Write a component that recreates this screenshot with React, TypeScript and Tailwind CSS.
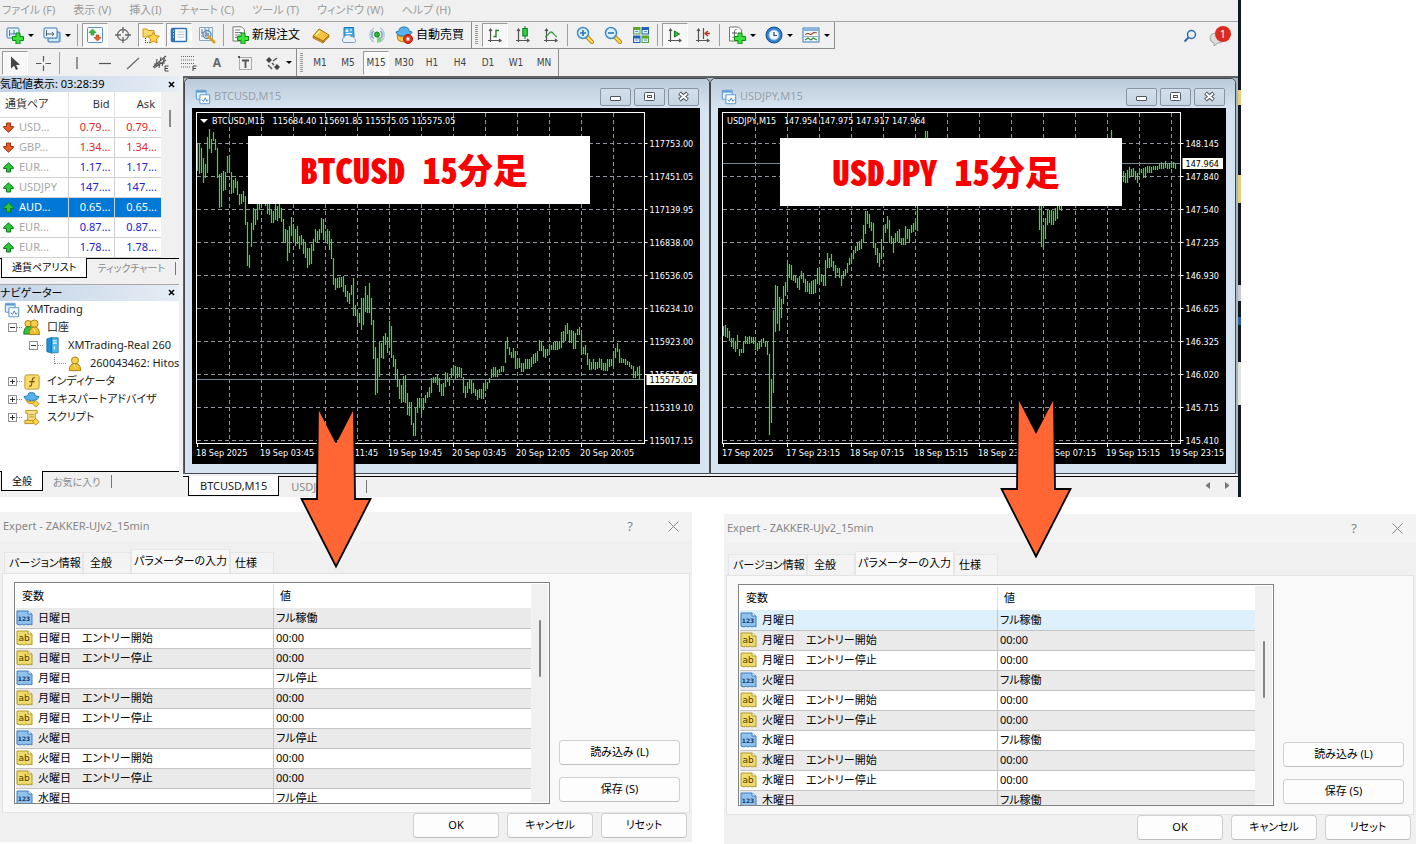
import type { ReactNode } from "react";

type Bar = [number, number];
type Segment = { start: number; bars: Bar[] };
type ChartProps = {
  title: string;
  caption: string;
  menu?: boolean;
  plotRight: number;
  gridCount: number;
  prices: string[];
  current: string;
  currentY: number;
  times: string[];
  segments: Segment[];
  children: ReactNode;
};

/* high / low of each bar, two pixels per bar */
const BTC: Segment[] = [
  {
    start: 0,
    bars: [
      [35, 63], [35, 66], [40, 65], [50, 75], [56, 70], [29, 65], [21, 41], [31, 45], [24, 33], [31, 42],
      [40, 70], [66, 100], [65, 99], [63, 83], [64, 82], [48, 65], [47, 65], [64, 86], [72, 85], [70, 80],
      [73, 87], [86, 97], [86, 96], [83, 94], [88, 117], [114, 158], [147, 160], [115, 139], [100, 122], [101, 117],
      [96, 112], [90, 102], [88, 98], [85, 96], [88, 98], [94, 106], [96, 107], [101, 115], [103, 115], [96, 112],
      [98, 113], [95, 110], [100, 114], [111, 134], [121, 135], [122, 153], [118, 145], [109, 128], [116, 133], [121, 138],
      [118, 136], [128, 141], [127, 137], [131, 146], [134, 150], [140, 160], [140, 157], [136, 156], [131, 143], [121, 134],
      [123, 135], [121, 132], [110, 125], [111, 132], [123, 133], [121, 136], [123, 142], [131, 151], [150, 177], [170, 182],
      [170, 180], [169, 180], [169, 179], [168, 184], [177, 189], [183, 194], [185, 196], [177, 187], [170, 208], [197, 208],
      [202, 215], [205, 215], [190, 222], [190, 217], [178, 204], [187, 205], [175, 205], [190, 217], [212, 251], [239, 287],
      [250, 285], [234, 269], [235, 250], [228, 251], [225, 237], [229, 245], [213, 237], [218, 250], [247, 259], [251, 271],
      [261, 279], [272, 291], [277, 295], [268, 294], [267, 295], [285, 307], [294, 308], [294, 317], [315, 328], [299, 328],
      [290, 305], [290, 300], [290, 306], [290, 302], [287, 295], [284, 290], [279, 289], [270, 285], [269, 275], [269, 275],
      [266, 277], [270, 284], [276, 288], [275, 288], [264, 279], [265, 274], [269, 278], [260, 270], [257, 267], [258, 271],
      [259, 270], [259, 269], [260, 270], [269, 285], [278, 290], [274, 285], [271, 281], [272, 286], [275, 285], [281, 288],
      [282, 292], [281, 290], [281, 291], [275, 291], [275, 283], [274, 281], [270, 275], [261, 270], [259, 269], [259, 269],
      [262, 269], [261, 265], [258, 264], [258, 264], [233, 255], [229, 241], [239, 247], [244, 250], [240, 250], [243, 261],
      [251, 260], [250, 260], [255, 264], [255, 264], [251, 261], [251, 261], [251, 261], [249, 259], [246, 256], [245, 255],
      [243, 253], [232, 243], [234, 243], [238, 249], [241, 250], [241, 248], [237, 244], [237, 242], [234, 242], [234, 242],
      [234, 242], [233, 241], [224, 240], [223, 235], [217, 233], [215, 226], [222, 235], [222, 235], [223, 241], [225, 241],
      [221, 227], [219, 227], [226, 247], [239, 246], [237, 247], [245, 257], [251, 262], [254, 262], [251, 261], [254, 262],
      [254, 261], [250, 260], [251, 262], [255, 263], [255, 263], [251, 263], [251, 259], [251, 258], [243, 258], [240, 250],
      [235, 244], [241, 255], [250, 255], [251, 255], [251, 257], [253, 257], [254, 259], [257, 261], [258, 270], [263, 270],
      [259, 268], [258, 272],
    ],
  },
];

const JPY: Segment[] = [
  {
    start: 0,
    bars: [
      [218, 228], [217, 229], [220, 230], [223, 233], [230, 239], [230, 241], [233, 244], [227, 241], [241, 248], [241, 245],
      [233, 245], [228, 236], [229, 236], [228, 236], [229, 235], [229, 236], [232, 242], [235, 243], [234, 241], [231, 239],
      [230, 235], [233, 239], [234, 247], [246, 327], [271, 315], [202, 285], [177, 224], [178, 216], [189, 223], [191, 210],
      [178, 196], [174, 188], [155, 180], [156, 170], [157, 172], [167, 173], [168, 175], [170, 180], [168, 182], [163, 171],
      [165, 175], [171, 184], [173, 184], [175, 186], [173, 186], [172, 186], [171, 185], [160, 176], [159, 175], [166, 174],
      [168, 178], [152, 178], [145, 160], [150, 160], [146, 159], [153, 163], [157, 170], [160, 165], [160, 170], [167, 178],
      [163, 171], [161, 168], [155, 165], [150, 157], [146, 156], [142, 151], [138, 145], [135, 143], [133, 142], [131, 141],
      [117, 134], [103, 126], [103, 116], [106, 120], [114, 123], [115, 140], [135, 147], [140, 155], [145, 159], [131, 151],
      [118, 133], [116, 125], [108, 121], [112, 135], [128, 136], [130, 145], [125, 135], [123, 134], [121, 135], [130, 137],
      [130, 137], [118, 137], [121, 131], [121, 135], [117, 125], [115, 124], [113, 122], [85, 123],
    ],
  },
  { start: 101, bars: [[23, 60], [23, 60]] },
  {
    start: 158,
    bars: [
      [90, 122], [90, 139], [118, 140], [110, 131], [102, 117], [102, 115], [102, 117], [103, 117], [100, 113], [96, 111],
      [92, 101], [90, 103],
    ],
  },
  { start: 194, bars: [[22, 40]] },
  {
    start: 200,
    bars: [
      [63, 74], [65, 75], [62, 75], [59, 70], [61, 68], [60, 69], [63, 72], [65, 75], [60, 67], [61, 65],
      [60, 70], [59, 70], [58, 65], [58, 65], [59, 65], [58, 62], [58, 62], [58, 62], [55, 61], [54, 61],
      [55, 61], [53, 60], [56, 61], [55, 61], [53, 60], [54, 60], [55, 61],
    ],
  },
];

const BTC_PRICES = ["117753.00", "117451.05", "117139.95", "116838.00", "116536.05", "116234.10", "115923.00", "115621.05", "115319.10", "115017.15"];
const JPY_PRICES = ["148.145", "147.840", "147.540", "147.235", "146.930", "146.625", "146.325", "146.020", "145.715", "145.410"];
const BTC_TIMES = ["18 Sep 2025", "19 Sep 03:45", "19 Sep 11:45", "19 Sep 19:45", "20 Sep 03:45", "20 Sep 12:05", "20 Sep 20:05"];
const JPY_TIMES = ["17 Sep 2025", "17 Sep 23:15", "18 Sep 07:15", "18 Sep 15:15", "18 Sep 23:15", "19 Sep 07:15", "19 Sep 15:15", "19 Sep 23:15"];

const MENU = ["ファイル (F)", "表示 (V)", "挿入(I)", "チャート (C)", "ツール (T)", "ウィンドウ (W)", "ヘルプ (H)"];
const PERIODS = ["M1", "M5", "M15", "M30", "H1", "H4", "D1", "W1", "MN"];

const QUOTES = [
  { symbol: "USD...", bid: "0.79...", ask: "0.79...", up: false },
  { symbol: "GBP...", bid: "1.34...", ask: "1.34...", up: false },
  { symbol: "EUR...", bid: "1.17...", ask: "1.17...", up: true },
  { symbol: "USDJPY", bid: "147....", ask: "147....", up: true },
  { symbol: "AUD...", bid: "0.65...", ask: "0.65...", up: true, selected: true },
  { symbol: "EUR...", bid: "0.87...", ask: "0.87...", up: true },
  { symbol: "EUR...", bid: "1.78...", ask: "1.78...", up: true },
];

type Param = [name: string, value: string];
const LEFT_PARAMS: Param[] = [
  ["日曜日", "フル稼働"],
  ["日曜日　エントリー開始", "00:00"],
  ["日曜日　エントリー停止", "00:00"],
  ["月曜日", "フル停止"],
  ["月曜日　エントリー開始", "00:00"],
  ["月曜日　エントリー停止", "00:00"],
  ["火曜日", "フル停止"],
  ["火曜日　エントリー開始", "00:00"],
  ["火曜日　エントリー停止", "00:00"],
  ["水曜日", "フル停止"],
];
const RIGHT_PARAMS: Param[] = [
  ["月曜日", "フル稼働"],
  ["月曜日　エントリー開始", "00:00"],
  ["月曜日　エントリー停止", "00:00"],
  ["火曜日", "フル稼働"],
  ["火曜日　エントリー開始", "00:00"],
  ["火曜日　エントリー停止", "00:00"],
  ["水曜日", "フル稼働"],
  ["水曜日　エントリー開始", "00:00"],
  ["水曜日　エントリー停止", "00:00"],
  ["木曜日", "フル稼働"],
];

/* ---------- icons ---------- */

function Icon({ children, size = 18 }: { children: ReactNode; size?: number }) {
  return (
    <svg width={size} height={size} viewBox="0 0 18 18" fill="none" className="shrink-0" aria-hidden="true">
      {children}
    </svg>
  );
}

const Plus = () => <path d="M10 7h4v3.500h3.500v4H14V18h-4v-3.500H6.500v-4H10z" fill="#3be23b" stroke="#0b8a12" />;
const Axes = () => <path d="M4.500 3v13M2 14.500h13M3 5l1.500-2L6 5M13 13l2 1.500-2 1.500" stroke="#555" strokeWidth="1.200" />;
const Wand = () => <path d="M11 11l5 5" stroke="#d9a520" strokeWidth="3" strokeLinecap="round" />;

const NewChartIcon = () => (
  <Icon>
    <rect x="1" y="2" width="12" height="10" rx="1" fill="#e8f3fc" stroke="#3a7ab8" />
    <path d="M3.500 4v6M8 4v4M3 8h7" stroke="#3a7ab8" />
    <Plus />
  </Icon>
);
const ProfilesIcon = () => (
  <Icon>
    <rect x="5" y="6" width="12" height="10" rx="1" fill="#a9cdec" stroke="#3a7ab8" />
    <path d="M6 14h9" stroke="#fff" />
    <rect x="1" y="2" width="13" height="10" rx="1" fill="#eef6fd" stroke="#3a7ab8" />
    <path d="M3.500 4v6M3 8h8M9 6l2 2-2 2" stroke="#4b5d6c" />
  </Icon>
);
const MarketWatchIcon = () => (
  <Icon>
    <rect x="1.500" y="1.500" width="15" height="15" rx="1" fill="#f7fbff" stroke="#5b93c9" />
    <path d="M6.500 3l3.500 3.500H8V9H5V6.500H3z" fill="#34c234" stroke="#15801a" strokeWidth=".6" />
    <path d="M11.500 15L8 11.500h2V9h3v2.500h2z" fill="#f0622a" stroke="#a93a10" strokeWidth=".6" />
  </Icon>
);
const TargetIcon = () => (
  <Icon>
    <circle cx="9" cy="9" r="5.500" stroke="#666" strokeWidth="1.300" />
    <path d="M9 1v6M9 11v6M1 9h6M11 9h6" stroke="#666" strokeWidth="1.300" />
  </Icon>
);
const FavoriteIcon = () => (
  <Icon>
    <path d="M1 3h4l1 1.500h6V11H1z" fill="#f7dc6a" stroke="#c79a1e" />
    <path d="M3.500 12v5M5 16.500h3" stroke="#444" strokeDasharray="1 1" />
    <path d="M11.500 6l1.900 3.600 4 .6-2.900 2.800.7 4-3.700-1.900L7.800 17l.8-4-2.900-2.800 4-.6z" fill="#ffd84a" stroke="#c98a12" />
  </Icon>
);
const NavigatorIcon = () => (
  <Icon>
    <rect x="1.500" y="2.500" width="15" height="13" rx="1" fill="#fff" stroke="#2f74b5" strokeWidth="1.500" />
    <rect x="2" y="3" width="3" height="12" fill="#2f74b5" />
    <path d="M3 5h1M3 8h1M3 11h1" stroke="#fff" />
    <path d="M7.500 6h7M7.500 8.500h7M7.500 11h7" stroke="#b5c4d0" />
  </Icon>
);
const TesterIcon = () => (
  <Icon>
    <path d="M1.500 1.500h13v13h-13z" fill="#f4f7fb" stroke="#8aa7c2" />
    <path d="M4 3v9M7 2v8M11 2v4M3 6h3" stroke="#6e7f8f" strokeDasharray="2 1" />
    <circle cx="9" cy="8.500" r="4" fill="#cfe6f8" fillOpacity=".85" stroke="#4a8cc4" strokeWidth="1.300" />
    <path d="M8 6v5M10 7v3" stroke="#456" />
    <Wand />
  </Icon>
);
const NewOrderIcon = () => (
  <Icon>
    <path d="M2 .8h8.500l3 3V15H2z" fill="#fff" stroke="#777" />
    <path d="M4 4h5M4 6.500h7M4 9h5M4 11.500h3" stroke="#777" />
    <Plus />
  </Icon>
);
const BookIcon = () => (
  <Icon>
    <path d="M1 10l6-7 10 6-6 6z" fill="#f5c242" stroke="#a8730e" />
    <path d="M1 10l10 5v2L1 12zM11 15l6-6v2l-6 6z" fill="#d28c14" stroke="#a8730e" strokeWidth=".7" />
    <path d="M4 9l4-4" stroke="#fff0b0" strokeWidth="1.500" />
  </Icon>
);
const EditorIcon = () => (
  <Icon>
    <path d="M4 1.500h9.500l.5 9.500H4z" fill="#45aeea" stroke="#1b78b8" />
    <path d="M6 4h2v1.500H6zM10 4h2M6 7.500h6" stroke="#fff" />
    <path d="M4 16.500a2.700 2.700 0 010-5 4 4 0 017-1 3 3 0 013.500 2 2.200 2.200 0 010 4z" fill="#eaf1f8" stroke="#7d9cbd" />
  </Icon>
);
const SignalIcon = () => (
  <Icon>
    <path d="M6 16A8 8 0 016 2M12 2a8 8 0 010 14" stroke="#a9c3d6" strokeWidth="1.300" />
    <path d="M5.500 12.500a5 5 0 010-7.500M12.500 5a5 5 0 010 7.500" stroke="#6f9fc0" strokeWidth="1.500" />
    <path d="M9 9v8q4-1 5-4" fill="#7fd67f" />
    <circle cx="9" cy="8.500" r="2.500" fill="#35b835" stroke="#168020" />
  </Icon>
);
const AutoTradeIcon = () => (
  <Icon>
    <path d="M2 9q7 4 13 0v5q-6 4-12 0z" fill="#f4c843" stroke="#b9860f" />
    <path d="M4 5q0-4 5-4t5 4l3 1q-1 4-8 4T1 6z" fill="#55b2ec" stroke="#2878b4" />
    <circle cx="13" cy="13" r="4.500" fill="#e03420" stroke="#a31c10" />
    <rect x="11.500" y="11.500" width="3" height="3" fill="#fff" />
  </Icon>
);
const BarsIcon = () => (
  <Icon>
    <Axes />
    <path d="M10 3.500v8M10 4.500h3M7.500 10.500H10" stroke="#1f8a2c" strokeWidth="1.400" />
  </Icon>
);
const CandlesIcon = () => (
  <Icon>
    <Axes />
    <path d="M11 0v13" stroke="#0f7a1c" />
    <rect x="8.800" y="2.500" width="4.500" height="7.500" fill="#2fd23c" stroke="#0f7a1c" />
  </Icon>
);
const LineIcon = () => (
  <Icon>
    <Axes />
    <path d="M3 11c3-1 4-5 6-5s3 3 6 5" stroke="#3c9a48" strokeWidth="1.300" />
  </Icon>
);
const ZoomIcon = ({ plus }: { plus?: boolean }) => (
  <Icon>
    <path d="M11 11l5 5" stroke="#b08010" strokeWidth="4" strokeLinecap="round" />
    <path d="M11 11l5 5" stroke="#ffdd52" strokeWidth="2.400" strokeLinecap="round" />
    <circle cx="7" cy="7" r="5.500" fill="#dff0fc" stroke="#3b8cc8" strokeWidth="1.500" />
    <path d={plus ? "M4 7h6M7 4v6" : "M4 7h6"} stroke="#2878b4" strokeWidth="1.600" />
  </Icon>
);
const TileIcon = () => (
  <Icon>
    <path d="M1 1h7.500v7.500H1z" fill="#55a82a" />
    <path d="M9.500 1H17v7.500H9.500z" fill="#1e5fc0" />
    <path d="M1 9.500h7.500V17H1z" fill="#1e5fc0" />
    <path d="M9.500 9.500H17V17H9.500z" fill="#55a82a" />
    <path d="M2 4h5.500v3.500H2zM10.500 4H16v3.500h-5.500zM2 12.500h5.500V16H2zM10.500 12.500H16V16h-5.500z" fill="#dcebfb" />
    <path d="M3 5.500h3M12 5.500h3M3 14h3M12 14h3" stroke="#69a" />
  </Icon>
);
const ScrollIcon = () => (
  <Icon>
    <Axes />
    <path d="M8.500 5v6l5-3z" fill="#35c23f" stroke="#14761e" />
  </Icon>
);
const ShiftIcon = () => (
  <Icon>
    <Axes />
    <path d="M9.500 2v11" stroke="#555" strokeWidth="1.200" />
    <path d="M16 7.500h-4M14 5l-3 2.500L14 10" stroke="#c0321a" strokeWidth="1.400" />
  </Icon>
);
const TemplateIcon = () => (
  <Icon>
    <path d="M1.500 1h9l3 3v11h-12z" fill="#fff" stroke="#777" />
    <path d="M8.500 3.500c-2 0-2 1-2 4s0 4-2 4M4 7h5" stroke="#555" />
    <Plus />
  </Icon>
);
const ClockIcon = () => (
  <Icon>
    <circle cx="9" cy="9" r="8" fill="#2f7fd0" stroke="#1a4f90" />
    <circle cx="9" cy="9" r="5" fill="#f0f7ff" stroke="#9ac4ee" />
    <path d="M9 6v3.500h3" stroke="#345" strokeWidth="1.200" />
  </Icon>
);
const IndicatorsIcon = () => (
  <Icon>
    <rect x="1" y="2" width="16" height="14" fill="#f4faff" stroke="#3a7ab8" />
    <path d="M1.500 3h15v2h-15z" fill="#7fb3e2" />
    <path d="M3 8.500l3-1 3 1 3-2 3 .5" stroke="#a0522d" strokeWidth="1.200" />
    <path d="M1.500 10.500h15" stroke="#9ab" />
    <path d="M3 14l3-2 3 2 2-2 4 2" stroke="#2e8b3a" strokeWidth="1.200" />
  </Icon>
);
const CursorIcon = () => (
  <Icon>
    <path d="M5 2.500v12l3-2.700 2 4.200 2-1-2-4 4-.3z" fill="#444" />
  </Icon>
);
const CrosshairIcon = () => (
  <Icon>
    <path d="M9.500 2v5.500M9.500 11.500V17M2 9.500h5.500M11.500 9.500H17" stroke="#555" strokeWidth="1.200" />
  </Icon>
);
const VLineIcon = () => (
  <Icon>
    <path d="M9 3v12" stroke="#555" strokeWidth="1.200" />
  </Icon>
);
const HLineIcon = () => (
  <Icon>
    <path d="M3 9.500h12" stroke="#555" strokeWidth="1.200" />
  </Icon>
);
const TrendIcon = () => (
  <Icon>
    <path d="M3 15L15 4" stroke="#666" strokeWidth="1.200" />
  </Icon>
);
const ChannelIcon = () => (
  <Icon>
    <path d="M1 13L14 2M2 10l11-1M5 5l-1 8M9 3L7 14M13 2l-3 10M2 14l12-8" stroke="#555" strokeWidth="1.100" />
    <path d="M16.500 12H13v5h3.500M13 14.500h3" stroke="#444" />
  </Icon>
);
const FiboIcon = () => (
  <Icon>
    <path d="M1 2.500h14M1 6h14M1 9.500h14M1 13h10" stroke="#666" strokeDasharray="1 1" />
    <path d="M16.500 12H13v5M13 14.500h3" stroke="#444" />
  </Icon>
);
const LabelIcon = () => (
  <Icon>
    <rect x="3.500" y="3.500" width="12" height="12" stroke="#666" strokeDasharray="1 1" />
    <path d="M2 2h2v2H2z" fill="#555" />
    <path d="M6 6.500h7M9.500 6.500v7.500" stroke="#555" strokeWidth="1.800" />
  </Icon>
);
const ShapesIcon = () => (
  <Icon>
    <path d="M5 3l3 3-3 3-3-3zM13 10l3 3-3 3-3-3z" fill="#444" />
    <path d="M9 7l4-3M4 11l4 4M8 9l2 2" stroke="#555" strokeWidth="1.500" />
  </Icon>
);
const WindowsIcon = () => (
  <Icon size={16}>
    <rect x="1.500" y="1.500" width="11" height="10" rx="1" fill="#e6f2fc" stroke="#5a9ad4" strokeWidth="1.200" />
    <path d="M2 3h10" stroke="#5a9ad4" strokeWidth="2" />
    <rect x="5.500" y="6.500" width="11" height="10" rx="1" fill="#fff" stroke="#5a9ad4" strokeWidth="1.200" />
    <path d="M7.500 12l2 2 2-4 2 4 1.500-2" stroke="#3a7ab8" />
  </Icon>
);
const DirectionIcon = ({ up }: { up: boolean }) => (
  <svg width="11" height="11" viewBox="0 0 11 11" className="shrink-0" aria-hidden="true">
    <path
      d="M5.500 .8l4.900 4.700v1H7.500V10h-4V6.500H.6v-1z"
      transform={up ? undefined : "rotate(180 5.500 5.500)"}
      fill={up ? "#2fc43a" : "#ee5a26"}
      stroke={up ? "#0e7d1c" : "#9c2f0c"}
    />
  </svg>
);
const UserIcon = () => (
  <Icon size={16}>
    <circle cx="9" cy="5" r="4" fill="#f6cf4c" stroke="#a87a10" />
    <path d="M2.500 16.500q0-8 6.500-8t6.500 8z" fill="#f0bd2c" stroke="#a87a10" />
    <path d="M8 9.500l2 5" stroke="#fff2b0" />
  </Icon>
);
const UsersIcon = () => (
  <Icon size={17}>
    <circle cx="5.500" cy="5" r="3.500" fill="#f6cf4c" stroke="#a87a10" />
    <path d="M.8 16q0-8 5-8t5 8z" fill="#35c23f" stroke="#14761e" />
    <circle cx="12" cy="5" r="4" fill="#f6cf4c" stroke="#a87a10" />
    <path d="M6.500 16.500q0-8 5.500-8t5.500 8z" fill="#f0bd2c" stroke="#a87a10" />
    <path d="M11 10l2 4" stroke="#fff2b0" />
  </Icon>
);
const ServerIcon = () => (
  <Icon size={17}>
    <path d="M3 2l5-1.500V17l-5-1.500z" fill="#1d8fd8" stroke="#1268a4" strokeWidth=".8" />
    <path d="M8 .8h7v15.700L8 17z" fill="#4bb7f2" stroke="#1268a4" strokeWidth=".8" />
    <path d="M9.500 4h4M9.500 6.500h4M11 10v3" stroke="#fff" strokeWidth="1.200" />
  </Icon>
);
const FunctionIcon = () => (
  <Icon size={16}>
    <rect x="1" y="1" width="16" height="16" rx="2" fill="#f8dd6c" stroke="#b98d18" />
    <path d="M12.500 4.500c-3-1-3 1-3.500 4.500s-.5 5.500-3.500 4.500M6 8.500h6" stroke="#7a4f00" strokeWidth="1.300" />
  </Icon>
);
const ExpertIcon = () => (
  <Icon size={17}>
    <path d="M3 10q4 2.500 9 0v2q-4 4-9-2z" fill="#f4c843" stroke="#b9860f" />
    <path d="M5 5q0-3.500 4-3.500T13 5l4 1q-1 4-8 4T1 6z" fill="#55b2ec" stroke="#2878b4" />
    <path d="M13.500 10l3.500 3.500-3.500 3.500-3.500-3.500z" fill="#ffd84a" stroke="#b9860f" />
  </Icon>
);
const ScriptIcon = () => (
  <Icon size={17}>
    <path d="M3 1.500h12v3h-2V13H5V4.500H3z" fill="#fae38a" stroke="#b98d18" />
    <path d="M2 12h9v3.500H2zM6.500 6h5M6.500 8.500h5" fill="#f6d45a" stroke="#b98d18" />
    <path d="M13.500 10l3.500 3.500-3.500 3.500-3.500-3.500z" fill="#ffd84a" stroke="#b9860f" />
  </Icon>
);

function ParamIcon({ numeric }: { numeric: boolean }) {
  return (
    <svg width="17" height="16" viewBox="0 0 17 16" className="shrink-0" aria-hidden="true">
      <path
        d="M1 1h11l4 3v11l-2-1-2 1-2-1-2 1-2-1-2 1-3-1z"
        fill={numeric ? "#8fc3ee" : "#f0dc6c"}
        stroke={numeric ? "#3d7fbd" : "#b19a2c"}
      />
      <path d="M12 1v3h4" fill="#fff" stroke={numeric ? "#3d7fbd" : "#b19a2c"} />
      <text
        x="8"
        y="11"
        textAnchor="middle"
        fill={numeric ? "#0c3c74" : "#4a3c00"}
        className={numeric ? "font-['DejaVu_Sans',sans-serif] text-[6px] font-bold" : "font-['DejaVu_Sans',sans-serif] text-[9px]"}
      >
        {numeric ? "123" : "ab"}
      </text>
    </svg>
  );
}

/* ---------- toolbars ---------- */

function Tool({ label, pressed, children }: { label: string; pressed?: boolean; children: ReactNode }) {
  return (
    <button
      aria-label={label}
      aria-pressed={pressed}
      className={`flex h-6 w-[26px] mx-px shrink-0 items-center justify-center border ${
        pressed ? "border-t-[#9a9a9a] border-l-[#9a9a9a] border-r-white border-b-white bg-[#f8f8f8]" : "border-transparent"
      }`}
    >
      {children}
    </button>
  );
}

function DropTool({ label, children }: { label: string; children: ReactNode }) {
  return (
    <button aria-label={label} className="flex h-6 w-[37px] shrink-0 items-center gap-1 pl-[5px]">
      {children}
      <span className="border-x-3 border-t-3 border-x-transparent border-t-black" />
    </button>
  );
}

const Divider = () => <span className="mr-[3px] ml-[2px] h-[22px] w-px shrink-0 bg-[#a0a0a0]" />;
const Grip = () => (
  <span className="flex h-full w-[10px] shrink-0 items-center gap-1 border-l border-[#8c8c8c]">
    <span className="ml-[3px] h-5 w-[3px] bg-[repeating-linear-gradient(#999_0_1px,#eee_1px_2px)]" />
  </span>
);

function Toolbars() {
  return (
    <>
      <div className="flex h-7 items-center border-t border-[#a5a5a5] bg-[#f0f0f0]">
        <div className="flex h-full items-center border-r border-b border-[#8c8c8c] pl-px">
          <DropTool label="新規チャート"><NewChartIcon /></DropTool>
          <DropTool label="プロファイル"><ProfilesIcon /></DropTool>
          <Divider />
          <Tool label="気配値" pressed><MarketWatchIcon /></Tool>
          <Tool label="データウィンドウ"><TargetIcon /></Tool>
          <Tool label="ナビゲーター" pressed><FavoriteIcon /></Tool>
          <Tool label="ターミナル" pressed><NavigatorIcon /></Tool>
          <Tool label="ストラテジーテスター"><TesterIcon /></Tool>
          <Divider />
          <button className="flex w-20 shrink-0 items-center gap-[3px] pl-1 text-[12px] whitespace-nowrap">
            <NewOrderIcon />
            新規注文
          </button>
          <Tool label="ヒストリー"><BookIcon /></Tool>
          <Tool label="エディタ"><EditorIcon /></Tool>
          <Tool label="シグナル"><SignalIcon /></Tool>
          <button className="flex w-20 shrink-0 items-center gap-[3px] pl-1 text-[12px] whitespace-nowrap">
            <AutoTradeIcon />
            自動売買
          </button>
          <Grip />
          <Tool label="バーチャート" pressed><BarsIcon /></Tool>
          <Tool label="ローソク足"><CandlesIcon /></Tool>
          <Tool label="ラインチャート"><LineIcon /></Tool>
          <Divider />
          <Tool label="ズームイン"><ZoomIcon plus /></Tool>
          <Tool label="ズームアウト"><ZoomIcon /></Tool>
          <Tool label="整列"><TileIcon /></Tool>
          <Divider />
          <Tool label="自動スクロール" pressed><ScrollIcon /></Tool>
          <Tool label="チャートシフト"><ShiftIcon /></Tool>
          <Divider />
          <DropTool label="テンプレート"><TemplateIcon /></DropTool>
          <DropTool label="時間足"><ClockIcon /></DropTool>
          <DropTool label="インディケータ"><IndicatorsIcon /></DropTool>
        </div>
        <div className="ml-auto flex items-center gap-3 pr-[7px]">
          <button aria-label="検索">
            <svg width="14" height="14" viewBox="0 0 14 14" fill="none">
              <circle cx="8.500" cy="5.500" r="4" stroke="#2b6cb8" strokeWidth="1.500" />
              <path d="M5.500 8.500L1.500 12.500" stroke="#2b6cb8" strokeWidth="2" />
            </svg>
          </button>
          <button aria-label="通知" className="relative h-5 w-[22px]">
            <svg width="22" height="20" viewBox="0 0 22 20" fill="none">
              <path d="M1 12q0-5 7-5t7 5-6 5l-4 3v-3q-4-1-4-5z" fill="#dcdcdc" stroke="#a5a5a5" />
            </svg>
            <span className="absolute top-0 right-0 size-4 rounded-full bg-[#dc2a1c] text-center text-[11px] leading-4 text-white">1</span>
          </button>
        </div>
      </div>
      <div className="flex h-[27px] items-center bg-[#f0f0f0]">
        <div className="flex h-full items-center border-r border-[#8c8c8c] pl-px">
          <Tool label="カーソル" pressed><CursorIcon /></Tool>
          <Tool label="クロスヘア"><CrosshairIcon /></Tool>
          <Divider />
          <Tool label="垂直線"><VLineIcon /></Tool>
          <Tool label="水平線"><HLineIcon /></Tool>
          <Tool label="トレンドライン"><TrendIcon /></Tool>
          <Tool label="チャネル"><ChannelIcon /></Tool>
          <Tool label="フィボナッチ"><FiboIcon /></Tool>
          <Tool label="テキスト">
            <span className="text-[12px] font-bold text-[#666]">A</span>
          </Tool>
          <Tool label="ラベル"><LabelIcon /></Tool>
          <DropTool label="矢印"><ShapesIcon /></DropTool>
          <Grip />
          {PERIODS.map((p) => (
            <Tool key={p} label={p} pressed={p === "M15"}>
              <span className="font-['DejaVu_Sans_Condensed','DejaVu_Sans',sans-serif] text-[10px] text-[#444]">{p}</span>
            </Tool>
          ))}
        </div>
      </div>
    </>
  );
}

/* ---------- left side ---------- */

function PanelHeader({ title }: { title: string }) {
  return (
    <div className="flex h-4 shrink-0 items-center justify-between bg-gradient-to-r from-[#c3d3e6] to-[#e6edf5] pr-[3px] text-[11px] leading-4 text-black">
      {title}
      <button aria-label="閉じる" className="flex size-2 items-center">
        <svg width="7" height="7" viewBox="0 0 7 7">
          <path d="M1 1l5 5M6 1L1 6" stroke="#000" strokeWidth="1.500" />
        </svg>
      </button>
    </div>
  );
}

function PanelTabs({ active, other }: { active: string; other: string }) {
  return (
    <div className="flex h-5 shrink-0 border-t border-black bg-[#f0f0f0] text-[10px] leading-[18px] whitespace-nowrap">
      <button className="-mt-px ml-px border-x border-b border-black bg-white px-[10px] text-black">{active}</button>
      <button className="px-[10px] text-[#8a8a8a]">{other}</button>
      <span className="mt-[3px] h-[13px] w-px shrink-0 bg-[#777]" />
    </div>
  );
}

function MarketWatch() {
  return (
    <section className="mr-1 shrink-0">
      <PanelHeader title="気配値表示: 03:28:39" />
      <div className="flex bg-[#f0f0f0]">
        <table className="w-[161px] table-fixed border-collapse bg-white text-[11px]">
          <thead>
            <tr className="h-[25px] border-b border-[#d8d8d8] text-[#333]">
              <th className="w-[68px] border-r border-[#e4e4e4] pl-[5px] text-left font-normal">通貨ペア</th>
              <th className="w-[46px] border-r border-[#e4e4e4] pr-1 text-right font-normal">Bid</th>
              <th className="pr-[6px] text-right font-normal">Ask</th>
            </tr>
          </thead>
          <tbody>
            {QUOTES.map((q, i) => (
              <tr
                key={i}
                className={`h-5 border-b border-[#d0d0d0] leading-4 ${
                  q.selected ? "bg-[#0078d7] text-white" : q.up ? "text-[#2323c8]" : "text-[#dc2828]"
                }`}
              >
                <td className="border-r border-[#d0d0d0] pl-[3px]">
                  <span className={`flex items-center gap-[5px] ${q.selected ? "text-white" : "text-[#a6a6a6]"}`}>
                    <DirectionIcon up={q.up} />
                    {q.symbol}
                  </span>
                </td>
                <td className="border-r border-[#d0d0d0] pr-[3px] text-right">{q.bid}</td>
                <td className="pr-1 text-right">{q.ask}</td>
              </tr>
            ))}
          </tbody>
        </table>
        <div className="mt-[18px] ml-2 h-[17px] w-[2px] bg-[#8a8a8a]" />
      </div>
      <PanelTabs active="通貨ペアリスト" other="ティックチャート" />
    </section>
  );
}

function TreeBox({ open }: { open: boolean }) {
  return (
    <svg width="14" height="9" viewBox="0 0 14 9" className="shrink-0" aria-hidden="true">
      <rect x=".5" y=".5" width="8" height="8" fill="#fff" stroke="#919191" />
      <path d={open ? "M2 4.500h5" : "M2 4.500h5M4.500 2v5"} stroke="#333" />
      <path d="M9 4.500h5" stroke="#888" strokeDasharray="1 1" />
    </svg>
  );
}

function Navigator() {
  const row = "flex h-[18px] items-center whitespace-nowrap gap-[7px]";
  return (
    <section className="mr-1 flex min-h-0 flex-1 flex-col border-t border-[#a8a8a8]">
      <PanelHeader title="ナビゲーター" />
      <div className="flex-1 overflow-hidden bg-white text-[11px] text-[#222]">
        <div className={`${row} pl-1`}><WindowsIcon />XMTrading</div>
        <div className={`${row} pl-2`}>
          <span className="flex items-center gap-px"><TreeBox open /><UsersIcon /></span>口座
        </div>
        <div className={`${row} pl-[29px]`}>
          <span className="flex items-center gap-px"><TreeBox open /><ServerIcon /></span>XMTrading-Real 260
        </div>
        <div className={`${row} pl-[54px]`}>
          <span className="flex items-center gap-px">
            <span className="mb-2 h-[9px] w-3 border-b border-l border-dotted border-[#888]" />
            <UserIcon />
          </span>
          260043462: Hitos
        </div>
        <div className={`${row} pl-2`}>
          <span className="flex items-center gap-[2px]"><TreeBox open={false} /><FunctionIcon /></span>インディケータ
        </div>
        <div className={`${row} pl-2`}>
          <span className="flex items-center gap-px"><TreeBox open={false} /><ExpertIcon /></span>エキスパートアドバイザ
        </div>
        <div className={`${row} pl-2`}>
          <span className="flex items-center gap-px"><TreeBox open={false} /><ScriptIcon /></span>スクリプト
        </div>
      </div>
      <PanelTabs active="全般" other="お気に入り" />
    </section>
  );
}

/* ---------- charts ---------- */

function Chart({ caption, menu, plotRight, gridCount, prices, current, currentY, times, segments }: Omit<ChartProps, "title" | "children">) {
  const path = segments
    .flatMap((s) => s.bars.map(([hi, lo], i) => `M${5.5 + (s.start + i) * 2} ${hi}V${lo}`))
    .join("");
  return (
    <svg
      viewBox="0 0 508 356"
      className="block w-full bg-black font-['DejaVu_Sans_Condensed','DejaVu_Sans',sans-serif] text-[9px]"
      role="img"
      aria-label={caption}
    >
      <g stroke="#8b96a0" strokeDasharray="4 3" shapeRendering="crispEdges">
        {Array.from({ length: gridCount }, (_, i) => (
          <path key={i} d={`M${37.5 + i * 32} 5V335`} />
        ))}
        {prices.map((p, i) => (
          <path key={p} d={`M5 ${35.5 + i * 33}H${plotRight}`} />
        ))}
      </g>
      <path d={`M5 ${currentY}H${plotRight}`} stroke="#778899" shapeRendering="crispEdges" />
      <path d={path} stroke="#3adc3a" strokeWidth="1.200" />
      <path d={`M4.500 335.500V4.500H${plotRight}V335.500z`} fill="none" stroke="#fff" shapeRendering="crispEdges" />
      <g fill="#fff">
        {menu && <path d="M8 11h8l-4 4z" />}
        <text x={menu ? 20 : 9} y="16" xmlSpace="preserve">{caption}</text>
        {prices.map((p, i) => (
          <g key={p}>
            <path d={`M${plotRight} ${35.5 + i * 33}h3`} stroke="#fff" />
            <text x={plotRight + 5} y={39 + i * 33}>{p}</text>
          </g>
        ))}
        {times.map((t, i) => (
          <g key={t}>
            <path d={`M${5.5 + i * 64} 336v3`} stroke="#fff" />
            <text x={4 + i * 64} y="348">{t}</text>
          </g>
        ))}
      </g>
      <rect x={plotRight + 2} y={currentY - 5.5} width={505 - plotRight - 2} height="11" fill="#fffff4" />
      <text x={plotRight + 5} y={currentY + 3.5} fill="#000">{current}</text>
    </svg>
  );
}

function ChartWindow({ title, children, ...chart }: ChartProps) {
  const button = "flex h-[18px] w-[31px] items-center justify-center rounded-[2px] border border-[#8795a5] bg-gradient-to-b from-[#d3dfea] to-[#c6d4e2]";
  return (
    <section className="min-w-0 flex-1 rounded-t-[5px] border border-[#45494d] bg-[#d6e3f0] pr-[9px] pb-[9px] pl-[7px]">
      <header className="-mr-[9px] -ml-[7px] flex h-[29px] items-center rounded-t-[5px] bg-gradient-to-b from-[#bccbda] to-[#d6e3f0] pt-[6px] pr-[10px] pl-[10px]">
        <WindowsIcon />
        <h2 className="ml-[3px] flex-1 text-[11px] text-[#98a1aa]">{title}</h2>
        <div className="flex gap-[3px]">
          <button aria-label="最小化" className={button}>
            <span className="mt-1 h-[5px] w-[11px] rounded-[1px] border border-[#4d5661] bg-white" />
          </button>
          <button aria-label="最大化" className={button}>
            <svg width="11" height="9" viewBox="0 0 11 9" fill="none">
              <rect x=".5" y=".5" width="10" height="8" rx="1" fill="#fff" stroke="#4d5661" />
              <rect x="3.500" y="3.500" width="4" height="2" stroke="#4d5661" />
            </svg>
          </button>
          <button aria-label="閉じる" className={button}>
            <svg width="13" height="11" viewBox="0 0 13 11">
              <path d="M2.500 2l8 7M10.500 2l-8 7" stroke="#4d5661" strokeWidth="4" />
              <path d="M3 2.500l7 6M10 2.500l-7 6" stroke="#fff" strokeWidth="2" />
            </svg>
          </button>
        </div>
      </header>
      <div className="relative">
        <Chart {...chart} />
        {children}
      </div>
    </section>
  );
}

const STAMP =
  "absolute flex h-[68px] w-[342px] items-center justify-center bg-white pr-[10px] pb-1 text-[35px] leading-none font-black whitespace-nowrap text-[#fa0000] font-['Noto_Sans_CJK_JP',sans-serif] [font-feature-settings:'hwid']";

function Workspace() {
  return (
    <div className="flex min-w-0 flex-1 flex-col">
      <div className="flex border-t-2 border-l border-[#5d6265] bg-[#aeb4b9] pr-[2px]">
        <ChartWindow
          title="BTCUSD,M15"
          caption="BTCUSD,M15   115684.40 115691.85 115575.05 115575.05"
          menu
          plotRight={452.5}
          gridCount={13}
          prices={BTC_PRICES}
          current="115575.05"
          currentY={271.5}
          times={BTC_TIMES}
          segments={BTC}
        >
          <p className={`${STAMP} top-7 left-14`}>BTCUSD 15分足</p>
        </ChartWindow>
        <ChartWindow
          title="USDJPY,M15"
          caption="USDJPY,M15   147.954 147.975 147.917 147.964"
          plotRight={462.5}
          gridCount={14}
          prices={JPY_PRICES}
          current="147.964"
          currentY={55.5}
          times={JPY_TIMES}
          segments={JPY}
        >
          <p className={`${STAMP} top-[30px] left-[62px]`}>USDJPY 15分足</p>
        </ChartWindow>
      </div>
      <div className="flex flex-1 bg-[#f0f0f0] pt-[2px]">
        <div className="flex h-5 flex-1 border-t border-black pl-[5px] text-[11px] leading-[18px]">
          <button className="-mt-px border-x border-b border-black bg-white px-[11px] text-[#222]">BTCUSD,M15</button>
          <button className="px-3 text-[#8a8a8a]">USDJPY,M15</button>
          <span className="mt-[3px] h-[13px] w-px bg-[#777]" />
          <span className="mt-[5px] mr-[9px] ml-auto flex h-[7px] gap-[15px]">
            <button aria-label="左へ" className="border-y-3 border-r-4 border-y-transparent border-r-[#777]" />
            <button aria-label="右へ" className="border-y-3 border-l-4 border-y-transparent border-l-[#777]" />
          </span>
        </div>
      </div>
    </div>
  );
}

/* ---------- dialogs ---------- */

type DialogProps = { params: Param[]; highlight?: boolean; thumb: string };

function ExpertDialog({ params, highlight, thumb }: DialogProps) {
  const tab = "h-[21px] border border-b-0 border-[#e6e6e6] bg-[#f3f3f3] text-left";
  const button = "h-[25px] rounded-[4px] border border-[#d0d0d0] border-b-[#bdbdbd] bg-[#fdfdfd] text-[11px] text-black";
  const stripe = (i: number) => {
    if (highlight && i === 0) return "bg-[#dff0fd]";
    return (i % 2 === 0) === !highlight ? "bg-[#eaeaea]" : "bg-white";
  };
  // with a highlighted first row the grey rows are the odd ones
  return (
    <section className="h-[330px] bg-[#f0f0f0] text-[11px] text-black">
      <header className="flex h-[29px] items-center bg-[#f3f3f3] pl-[3px] text-[#878787]">
        <h2 className="flex-1">Expert - ZAKKER-UJv2_15min</h2>
        <button aria-label="ヘルプ" className="w-5 text-[13px]">?</button>
        <button aria-label="閉じる" className="mr-[13px] ml-[28px]">
          <svg width="11" height="11" viewBox="0 0 11 11">
            <path d="M.5 .5l10 10M10.500 .5l-10 10" stroke="#888" />
          </svg>
        </button>
      </header>
      <div role="tablist" className="flex h-8 items-end pl-1 whitespace-nowrap">
        <button role="tab" className={`${tab} w-[79px] pl-1`}>バージョン情報</button>
        <button role="tab" className={`${tab} w-12 pl-[6px]`}>全般</button>
        <button role="tab" aria-selected="true" className="h-6 w-[99px] border border-b-0 border-[#e6e6e6] bg-[#f9f9f9] text-center">
          パラメーターの入力
        </button>
        <button role="tab" className={`${tab} w-11 pl-1`}>仕様</button>
      </div>
      <div className="mx-[2px] flex h-[240px] border border-[#e3e3e3] bg-[#f9f9f9] pt-2 pr-[9px] pl-[11px]">
        <div className="flex h-[222px] flex-1 overflow-hidden border border-[#828282] bg-white p-px">
          <table className="h-[225px] flex-1 table-fixed border-collapse">
            <thead>
              <tr className="h-6">
                <th className="w-1/2 border-r border-[#e0e0e0] pl-[6px] text-left font-normal">変数</th>
                <th className="pl-[6px] text-left font-normal">値</th>
              </tr>
            </thead>
            <tbody>
              {params.map(([name, value], i) => (
                <tr key={name} className={`h-5 border-b border-[#c4c4c4] leading-[18px] ${stripe(i)}`}>
                  <td className="border-r border-[#c4c4c4]">
                    <span className="flex items-center gap-[5px]">
                      <ParamIcon numeric={!name.includes("エントリー")} />
                      {name}
                    </span>
                  </td>
                  <td className="pl-[2px]">{value}</td>
                </tr>
              ))}
            </tbody>
          </table>
          <div className="w-[17px] bg-[#f0f0f0] pl-2">
            <div className={`${thumb} h-[57px] w-[2px] rounded-full bg-[#858585]`} />
          </div>
        </div>
        <div className="ml-[9px] flex w-[121px] flex-col justify-end gap-3 pb-[10px]">
          <button className={button}>読み込み (L)</button>
          <button className={button}>保存 (S)</button>
        </div>
      </div>
      <footer className="flex justify-end gap-2 pr-[5px]">
        <button className={`${button} w-[86px]`}>OK</button>
        <button className={`${button} w-[86px]`}>キャンセル</button>
        <button className={`${button} w-[86px]`}>リセット</button>
      </footer>
    </section>
  );
}

function Arrow({ className }: { className: string }) {
  return (
    <svg width="74" height="160" viewBox="0 0 74 160" className={`absolute ${className}`} aria-hidden="true">
      <path d="M19 0L37 35 55 0l1 90h15.500L37 157.500 2.500 90H18z" fill="#ff6633" />
      <path d="M55 0l1 90h15.500L37 157.500 2.500 90H18L19 0" fill="none" stroke="#000" strokeWidth="1.800" />
    </svg>
  );
}

export default function App() {
  return (
    <main className="relative bg-white font-['Noto_Sans','Noto_Sans_CJK_JP',sans-serif] [font-feature-settings:'palt']" lang="ja">
      <div className="mr-[175px] flex bg-[#f0f0f0]">
        <div className="min-w-0 flex-1">
          <nav className="flex h-[21px] items-center gap-[18px] pl-[2px] text-[11px] text-[#9c9c9c]">
            {MENU.map((m) => (
              <button key={m}>{m}</button>
            ))}
          </nav>
          <Toolbars />
          <div className="flex h-[421px]">
            <aside className="flex w-[183px] shrink-0 flex-col gap-[6px] pb-[6px]">
              <MarketWatch />
              <Navigator />
            </aside>
            <Workspace />
          </div>
        </div>
        <div className="flex w-[3px] flex-col bg-[#0d1a22]">
          <span className="mt-[90px] h-[15px] bg-[#e3cf7c]" />
          <span className="mt-[70px] h-7 bg-[#e3cf7c]" />
          <span className="mt-[82px] h-4 bg-[#c9ccd0]" />
          <span className="mt-4 h-2 bg-[#2b5f96]" />
          <span className="mt-[37px] h-[43px] bg-[#dfe6dc]" />
        </div>
      </div>
      <div className="mt-[15px] grid grid-cols-2 items-start gap-8">
        <ExpertDialog params={LEFT_PARAMS} thumb="mt-9" />
        <div className="pt-[2px]">
          <ExpertDialog params={RIGHT_PARAMS} highlight thumb="mt-[55px]" />
        </div>
      </div>
      <Arrow className="top-[409px] left-[299px]" />
      <Arrow className="top-[399px] left-[999px]" />
    </main>
  );
}
